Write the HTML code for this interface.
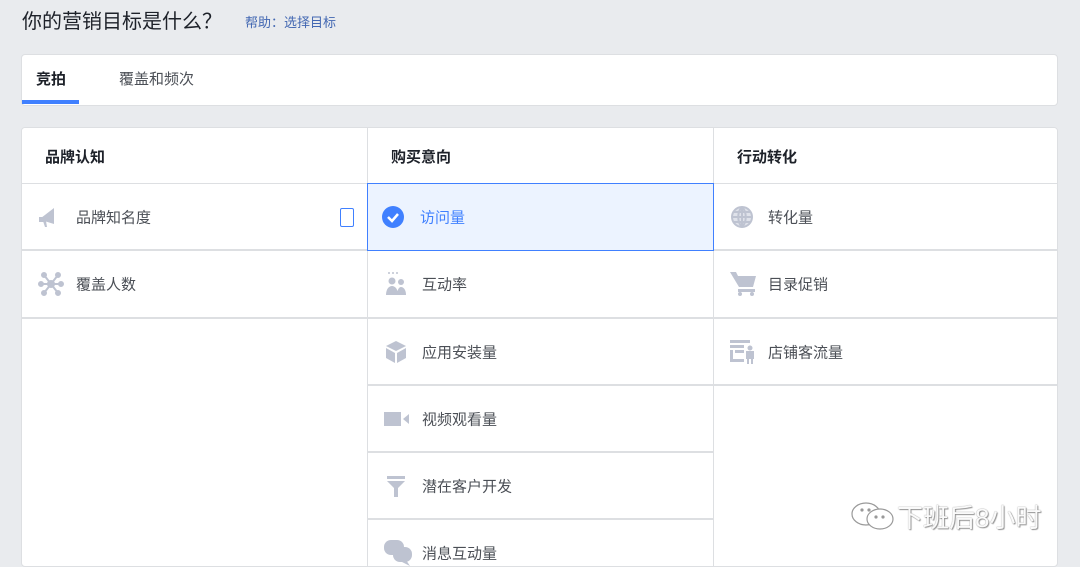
<!DOCTYPE html>
<html><head><meta charset="utf-8"><style>
*{margin:0;padding:0;box-sizing:border-box}
body{width:1080px;height:562px;background:#e9ebee;font-family:"Liberation Sans","Noto Sans CJK SC",sans-serif;position:relative;overflow:hidden}
.a{position:absolute}
.t{font-size:15px;color:#4b4f56;position:absolute;top:50%;transform:translateY(-50%);left:54px;white-space:nowrap}
.h{font-size:15px;font-weight:bold;color:#1d2129;position:absolute;top:18px;left:23px}
.cell{position:absolute;border-bottom:2px solid #dddfe2;background:#fff}
.ic{position:absolute;left:16px;top:50%;transform:translateY(-50%)}
</style></head><body>
<div class="a" style="left:22px;top:5px;font-size:20px;color:#1d2129">你的营销目标是什么？</div>
<div class="a" style="left:245px;top:12px;font-size:13px;color:#4267b2">帮助：选择目标</div>

<div class="a" style="left:21px;top:54px;width:1037px;height:52px;background:#fff;border:1px solid #dddfe2;border-radius:4px">
 <div class="a" style="left:14px;top:13px;font-size:15px;font-weight:bold;color:#1d2129">竞拍</div>
 <div class="a" style="left:97px;top:13px;font-size:15px;color:#4b4f56">覆盖和频次</div>
 <div class="a" style="left:0;top:45px;width:57px;height:4px;background:#4080ff"></div>
</div>

<div class="a" style="left:21px;top:127px;width:1037px;height:440px;background:#fff;border:1px solid #dddfe2;border-radius:4px;overflow:hidden">
 <div class="a" style="left:345px;top:0;width:1px;height:440px;background:#dddfe2"></div>
 <div class="a" style="left:691px;top:0;width:1px;height:440px;background:#dddfe2"></div>
 <div class="cell" style="left:0;top:0;width:345px;height:56px;border-bottom-width:1px"><div class="h">品牌认知</div></div>
 <div class="cell" style="left:346px;top:0;width:345px;height:56px;border-bottom-width:1px"><div class="h">购买意向</div></div>
 <div class="cell" style="left:692px;top:0;width:345px;height:56px;border-bottom-width:1px"><div class="h">行动转化</div></div>

 <div class="cell" style="left:0;top:56px;width:345px;height:67px"><svg class="ic" width="24" height="22" viewBox="0 0 24 22"><path d="M3 12l13-10v16L3 14z" fill="#bec3d1"/><rect x="1" y="11" width="5" height="5" fill="#bec3d1"/><path d="M5 15l2 6h2l-1-6z" fill="#bec3d1"/></svg><div class="t">品牌知名度</div><div class="a" style="left:318px;top:24px;width:14px;height:19px;border:1.5px solid #4080ff;border-radius:2px"></div></div>
 <div class="cell" style="left:0;top:123px;width:345px;height:68px"><svg class="ic" width="26" height="26" viewBox="0 0 26 26" stroke="#bec3d1" stroke-width="2" fill="#bec3d1"><path d="M13 13L6 4M13 13L20 4M13 13L3 13M13 13L23 13M13 13L6 22M13 13L20 22"/><circle cx="13" cy="13" r="3"/><circle cx="6" cy="4" r="2"/><circle cx="20" cy="4" r="2"/><circle cx="3" cy="13" r="2"/><circle cx="23" cy="13" r="2"/><circle cx="6" cy="22" r="2"/><circle cx="20" cy="22" r="2"/></svg><div class="t">覆盖人数</div></div>

 <div class="a" style="left:345px;top:55px;width:347px;height:68px;background:#ecf3ff;border:1.5px solid #4080ff"><svg class="ic" style="left:14px" width="22" height="22" viewBox="0 0 22 22"><circle cx="11" cy="11" r="11" fill="#4080ff"/><path d="M6 11l4 4 6-7" stroke="#fff" stroke-width="2.5" fill="none"/></svg><div class="t" style="left:52px;color:#4080ff">访问量</div></div>
 <div class="cell" style="left:346px;top:123px;width:345px;height:68px"><svg class="ic" width="26" height="26" viewBox="0 0 26 26" fill="#bec3d1"><circle cx="8" cy="10" r="3.5"/><circle cx="17" cy="11" r="3"/><path d="M2 24c0-6 3-9 6-9s6 3 6 9z"/><path d="M13 24c0-5 2-8 4-8s5 2 5 8z"/><circle cx="5" cy="2" r="1"/><circle cx="9" cy="2" r="1"/><circle cx="13" cy="2" r="1"/></svg><div class="t">互动率</div></div>
 <div class="cell" style="left:346px;top:191px;width:345px;height:67px"><svg class="ic" width="24" height="24" viewBox="0 0 24 24" fill="#bec3d1"><path d="M12 1l10 5-10 5-10-5z"/><path d="M2 8l9 5v10l-9-5z"/><path d="M22 8l-9 5v10l9-5z"/></svg><div class="t">应用安装量</div></div>
 <div class="cell" style="left:346px;top:258px;width:345px;height:67px"><svg class="ic" width="26" height="20" viewBox="0 0 26 20" fill="#bec3d1"><rect x="0" y="3" width="17" height="14"/><path d="M19 10l6-5v10z"/></svg><div class="t">视频观看量</div></div>
 <div class="cell" style="left:346px;top:325px;width:345px;height:67px"><svg class="ic" width="24" height="24" viewBox="0 0 24 24" fill="#bec3d1"><path d="M3 2h18v3H3zM3 7h18l-7 7H10z"/><rect x="10" y="14" width="4" height="9"/></svg><div class="t">潜在客户开发</div></div>
 <div class="cell" style="left:346px;top:392px;width:345px;height:67px"><svg class="ic" width="28" height="26" viewBox="0 0 28 26" fill="#bec3d1"><rect x="0" y="0" width="20" height="15" rx="7"/><rect x="9" y="7" width="19" height="15" rx="7"/><path d="M22 20l4 6-8-4z"/></svg><div class="t">消息互动量</div></div>

 <div class="cell" style="left:692px;top:56px;width:345px;height:67px"><svg class="ic" width="24" height="24" viewBox="0 0 24 24" fill="none" stroke="#bec3d1" stroke-width="2"><circle cx="12" cy="12" r="10" fill="#dfe2ea"/><path d="M2 12h20M12 2v20M4 7h16M4 17h16M12 2c-5 5-5 15 0 20M12 2c5 5 5 15 0 20"/></svg><div class="t">转化量</div></div>
 <div class="cell" style="left:692px;top:123px;width:345px;height:68px"><svg class="ic" width="28" height="24" viewBox="0 0 28 24" fill="#bec3d1"><path d="M0 0h6l2 4h18l-3 11H9z"/><path d="M8 17h17v3H8z"/><circle cx="10" cy="22" r="2"/><circle cx="22" cy="22" r="2"/></svg><div class="t">目录促销</div></div>
 <div class="cell" style="left:692px;top:191px;width:345px;height:67px"><svg class="ic" width="26" height="24" viewBox="0 0 26 24" fill="#bec3d1"><rect x="0" y="0" width="20" height="3"/><rect x="0" y="5" width="14" height="3"/><rect x="0" y="10" width="3" height="12"/><rect x="0" y="19" width="14" height="3"/><rect x="5" y="10" width="9" height="3"/><circle cx="20" cy="8" r="2.5"/><rect x="16" y="11" width="8" height="8"/><rect x="17" y="19" width="2" height="5"/><rect x="21" y="19" width="2" height="5"/></svg><div class="t">店铺客流量</div></div>
</div>

<svg class="a" style="left:850px;top:500px" width="46" height="34" viewBox="0 0 46 34" fill="#fff" stroke="#999" stroke-width="1.2"><ellipse cx="16" cy="14" rx="14" ry="11"/><ellipse cx="30" cy="19" rx="13" ry="10"/><circle cx="12" cy="10" r="1" fill="#999"/><circle cx="19" cy="10" r="1" fill="#999"/><circle cx="26" cy="17" r="1" fill="#999"/><circle cx="33" cy="17" r="1" fill="#999"/></svg>
<div class="a" style="left:897px;top:498px;font-size:26px;color:#fafafa;text-shadow:0 0 1px #777,1px 1px 1px #999;white-space:nowrap">下班后8小时</div>
</body></html>
